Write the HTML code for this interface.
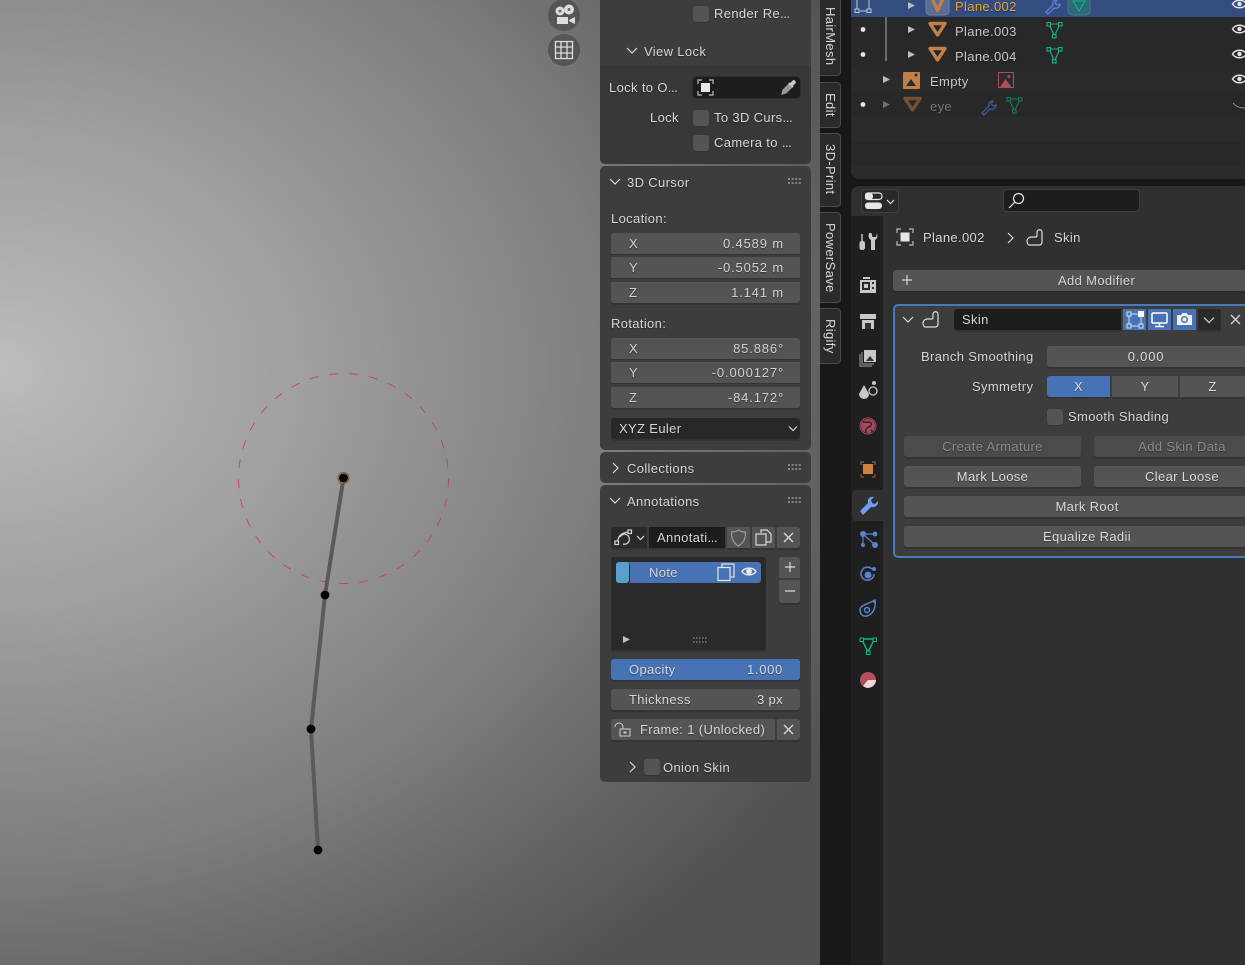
<!DOCTYPE html>
<html><head><meta charset="utf-8"><style>
*{box-sizing:border-box}
html,body{margin:0;padding:0;width:1245px;height:965px;overflow:hidden;background:#181818}
body{position:relative;font-family:"Liberation Sans",sans-serif;font-size:13px;letter-spacing:.35px;color:#d6d6d6}
.a,.t,.b,.c,.f,.i{position:absolute}
.t{white-space:nowrap;line-height:16px;text-shadow:0 1px 1px rgba(0,0,0,.35)}
.b{background:#545454;border-radius:3px;box-shadow:0 2px 0 #343434;text-align:center;line-height:21px;height:21px;white-space:nowrap;color:#dcdcdc;text-shadow:0 1px 1px rgba(0,0,0,.35)}
.f{background:#545454;height:21px;line-height:21px;color:#d0d0d0;box-shadow:0 1px 0 #343434;text-shadow:0 1px 1px rgba(0,0,0,.35)}
.f b{font-weight:normal;position:absolute;left:18px}.f u{text-decoration:none;position:absolute;right:16px;letter-spacing:.85px}
.c{width:16px;height:16px;background:#545454;border-radius:3px;box-shadow:0 1px 0 #343434}
.i{overflow:visible;fill:none;stroke:#d8d8d8;stroke-width:1.2}
.v{writing-mode:vertical-rl;position:absolute;color:#d8d8d8;line-height:14px;white-space:nowrap}
.tab{position:absolute;left:820px;width:21px;background:#2b2b2b;border:1px solid #4a4a4a;border-left:0;border-radius:0 4px 4px 0}
i{font-style:normal;letter-spacing:-.4px}
</style></head><body>
<div class="a" style="left:0;top:0;width:820px;height:965px;background:radial-gradient(ellipse 900px 720px at 0px 370px,#bebebe 0%,#b2b2b2 11%,#a0a0a0 33%,#8e8e8e 51%,#7e7e7e 68%,#6a6a6a 84%,#525252 106%)"></div>
<svg class="a" style="left:0;top:0" width="600" height="965">
<circle cx="343.500" cy="478.500" r="105" fill="none" stroke="#c9444c" stroke-width=".9" stroke-dasharray="9 11"/>
<polyline points="343.500,478 325,595 311,729 318,850" fill="none" stroke="#5a5a5a" stroke-width="4"/>
<circle cx="343.500" cy="478" r="6" fill="#5a5a5a"/><circle cx="343.500" cy="478" r="4.800" fill="#000" stroke="#b87a30" stroke-width=".8"/>
<circle cx="325" cy="595" r="4.400" fill="#000"/><circle cx="311" cy="729" r="4.400" fill="#000"/><circle cx="318" cy="850" r="4.400" fill="#000"/>
<circle cx="564" cy="15" r="16" fill="#555"/><circle cx="564" cy="50" r="16" fill="#555"/>
<circle cx="560" cy="11" r="4.500" fill="#ddd"/><circle cx="569" cy="9.500" r="5" fill="#ddd"/><circle cx="560" cy="11" r="1.500" fill="#666"/><circle cx="569" cy="9.500" r="1.500" fill="#666"/>
<rect x="557" y="17" width="11" height="7" fill="#ddd"/><path d="M569 20l6-3v7l-6-3z" fill="#ddd"/>
<path d="M555.500 41.500h17v17h-17zM555.500 47h17M555.500 53h17M561 41.500v17M567 41.500v17" fill="none" stroke="#ddd" stroke-width="1.300"/>
</svg>

<!-- Sidebar panels -->
<div class="a" style="left:600px;top:0;width:211px;height:68px;background:#3d3d3d"></div>
<div class="a" style="left:600px;top:66px;width:211px;height:98px;background:#383838;border-radius:0 0 5px 5px"></div>
<div class="a" style="left:600px;top:166px;width:211px;height:284px;background:#3d3d3d;border-radius:5px"></div>
<div class="a" style="left:600px;top:452px;width:211px;height:31px;background:#3d3d3d;border-radius:5px"></div>
<div class="a" style="left:600px;top:485px;width:211px;height:297px;background:#3d3d3d;border-radius:5px"></div>

<div class="c" style="left:693px;top:6px"></div><div class="t" style="left:714px;top:6px">Render Re<i>...</i></div>
<svg class="i" style="left:626px;top:46px" width="12" height="10"><path d="M1 2l5 5 5-5"/></svg><div class="t" style="left:644px;top:44px">View Lock</div>
<div class="t" style="left:609px;top:80px">Lock to O<i>...</i></div>
<div class="a" style="left:693px;top:77px;width:107px;height:21px;background:#1d1d1d;border-radius:4px;box-shadow:0 0 0 1px #2d2d2d"></div>
<svg class="i" style="left:697px;top:79px;stroke:#bbb" width="17" height="17"><path d="M1 5V1h4M12 1h4v4M16 12v4h-4M5 16H1v-4"/><rect x="4" y="4" width="9" height="9" fill="#e6e6e6" stroke="none"/></svg>
<svg class="i" style="left:780px;top:79px;stroke:#c8c8c8" width="17" height="17"><path d="M2 15l1-4 6-6 3 3-6 6z" fill="#999" stroke="#999"/><path d="M9 4l4 4" stroke-width="1.800"/><path d="M10 5l3-3c1-1 3 1 2 2l-3 3z" fill="#ccc"/></svg>
<div class="t" style="left:650px;top:110px">Lock</div>
<div class="c" style="left:693px;top:110px"></div><div class="t" style="left:714px;top:110px">To 3D Curs<i>...</i></div>
<div class="c" style="left:693px;top:135px"></div><div class="t" style="left:714px;top:135px">Camera to <i>...</i></div>

<svg class="i" style="left:609px;top:177px" width="12" height="10"><path d="M1 2l5 5 5-5"/></svg><div class="t" style="left:627px;top:175px">3D Cursor</div>
<svg class="a" style="left:787px;top:178px" width="16" height="7"><path d="M1 1h14M1 5h14" stroke="#999" stroke-width="1.400" stroke-dasharray="2 1.600"/></svg>
<div class="t" style="left:611px;top:211px">Location:</div>
<div class="f" style="left:611px;top:233px;width:189px;border-radius:3px 3px 0 0"><b>X</b><u>0.4589 m</u></div>
<div class="f" style="left:611px;top:257px;width:189px"><b>Y</b><u>-0.5052 m</u></div>
<div class="f" style="left:611px;top:282px;width:189px;border-radius:0 0 3px 3px;box-shadow:0 2px 0 #343434"><b>Z</b><u>1.141 m</u></div>
<div class="t" style="left:611px;top:316px">Rotation:</div>
<div class="f" style="left:611px;top:338px;width:189px;border-radius:3px 3px 0 0"><b>X</b><u>85.886°</u></div>
<div class="f" style="left:611px;top:362px;width:189px"><b>Y</b><u>-0.000127°</u></div>
<div class="f" style="left:611px;top:387px;width:189px;border-radius:0 0 3px 3px;box-shadow:0 2px 0 #343434"><b>Z</b><u>-84.172°</u></div>
<div class="a" style="left:611px;top:418px;width:189px;height:21px;background:#282828;border-radius:3px;box-shadow:0 2px 0 #343434"></div>
<div class="t" style="left:619px;top:421px">XYZ Euler</div>
<svg class="i" style="left:788px;top:425px" width="10" height="8"><path d="M1 1.500l4 4 4-4"/></svg>

<svg class="i" style="left:611px;top:462px" width="10" height="12"><path d="M2 1l5 5-5 5"/></svg><div class="t" style="left:627px;top:461px">Collections</div>
<svg class="a" style="left:787px;top:464px" width="16" height="7"><path d="M1 1h14M1 5h14" stroke="#999" stroke-width="1.400" stroke-dasharray="2 1.600"/></svg>

<svg class="i" style="left:609px;top:496px" width="12" height="10"><path d="M1 2l5 5 5-5"/></svg><div class="t" style="left:627px;top:494px">Annotations</div>
<svg class="a" style="left:787px;top:497px" width="16" height="7"><path d="M1 1h14M1 5h14" stroke="#999" stroke-width="1.400" stroke-dasharray="2 1.600"/></svg>

<div class="a" style="left:611px;top:527px;width:36px;height:21px;background:#2a2a2a;border-radius:3px 0 0 3px;box-shadow:0 2px 0 #343434"></div>
<svg class="i" style="left:614px;top:528px" width="32" height="19"><path d="M4 13c0-5 4-8 10-9M6 9a5 5 0 1 1 3 7"/><rect x="14" y="2" width="3.500" height="3.500"/><rect x="1" y="13" width="3.500" height="3.500"/><path d="M23 8l3.500 3.500L30 8"/></svg>
<div class="a" style="left:649px;top:527px;width:76px;height:21px;background:#1d1d1d;box-shadow:0 2px 0 #343434"></div><div class="t" style="left:657px;top:530px">Annotati<i>...</i></div>
<div class="a" style="left:727px;top:527px;width:23px;height:21px;background:#545454;box-shadow:0 2px 0 #343434"></div>
<svg class="i" style="left:730px;top:529px;stroke:#9a9a9a" width="17" height="18"><path d="M8.500 1c2 1.500 4 2 7 2 0 6-1 10-7 14-6-4-7-8-7-14 3 0 5-.5 7-2z"/></svg>
<div class="a" style="left:752px;top:527px;width:23px;height:21px;background:#545454;box-shadow:0 2px 0 #343434"></div>
<svg class="i" style="left:755px;top:529px" width="17" height="17"><path d="M6 4V1h6l4 4v8h-5M1 5h10v11H1z"/></svg>
<div class="a" style="left:777px;top:527px;width:23px;height:21px;background:#545454;border-radius:0 3px 3px 0;box-shadow:0 2px 0 #343434"></div>
<svg class="i" style="left:783px;top:532px;stroke-width:1.300" width="11" height="11"><path d="M1 1l9 9M10 1l-9 9"/></svg>

<div class="a" style="left:611px;top:557px;width:155px;height:93px;background:#2a2a2a;border-radius:3px;box-shadow:0 2px 0 #343434"></div>
<div class="a" style="left:616px;top:562px;width:145px;height:21px;background:#4772b3;border-radius:3px"></div>
<div class="a" style="left:616px;top:562px;width:13px;height:21px;background:#5ba0cc;border-radius:3px;box-shadow:1px 1px 0 #2a2a2a"></div>
<div class="t" style="left:649px;top:565px">Note</div>
<svg class="i" style="left:716px;top:563px;stroke:#e6e6e6" width="20" height="19"><path d="M6 4V1h12v13h-3M2 4.500h12v13H2z"/></svg>
<svg class="i" style="left:741px;top:565px;stroke:#e6e6e6;stroke-width:1.500" width="16" height="13"><path d="M1 6.500C4 2 12 2 15 6.500 12 11 4 11 1 6.500z"/><circle cx="8" cy="6.500" r="2.200" fill="#e6e6e6"/></svg>
<svg class="a" style="left:623px;top:636px" width="8" height="8"><path d="M0 0l7 3.500L0 7z" fill="#c0c0c0"/></svg>
<svg class="a" style="left:693px;top:637px" width="14" height="7"><path d="M0 1h14M0 5h14" stroke="#888" stroke-width="1.300" stroke-dasharray="1.500 1.500"/></svg>
<div class="a" style="left:779px;top:557px;width:21px;height:21px;background:#545454;border-radius:3px 3px 0 0"></div>
<div class="a" style="left:779px;top:580px;width:21px;height:23px;background:#545454;border-radius:0 0 3px 3px;box-shadow:0 2px 0 #343434"></div>
<svg class="i" style="left:783px;top:560px;stroke-width:1.200" width="14" height="34"><path d="M2 7h10M7 2v10M2 31h10"/></svg>

<div class="a" style="left:611px;top:659px;width:189px;height:21px;background:#4772b3;border-radius:3px;box-shadow:0 2px 0 #343434"></div>
<div class="t" style="left:629px;top:662px">Opacity</div><div class="t" style="right:462px;top:662px;letter-spacing:.7px">1.000</div>
<div class="a" style="left:611px;top:689px;width:189px;height:21px;background:#545454;border-radius:3px;box-shadow:0 2px 0 #343434"></div>
<div class="t" style="left:629px;top:692px">Thickness</div><div class="t" style="right:462px;top:692px">3 px</div>
<div class="a" style="left:611px;top:719px;width:164px;height:21px;background:#545454;border-radius:3px 0 0 3px;box-shadow:0 2px 0 #343434"></div>
<svg class="i" style="left:614px;top:721px;stroke:#ccc;stroke-width:1" width="18" height="17"><path d="M1 6a4 4 0 0 1 8 0v2"/><rect x="6" y="8" width="10" height="7"/><rect x="10" y="11" width="2" height="1"/></svg>
<div class="t" style="left:640px;top:722px">Frame: 1 (Unlocked)</div>
<div class="a" style="left:777px;top:719px;width:23px;height:21px;background:#545454;border-radius:0 3px 3px 0;box-shadow:0 2px 0 #343434"></div>
<svg class="i" style="left:783px;top:724px;stroke-width:1.300" width="11" height="11"><path d="M1 1l9 9M10 1l-9 9"/></svg>
<svg class="i" style="left:628px;top:761px" width="10" height="12"><path d="M2 1l5 5-5 5"/></svg>
<div class="c" style="left:644px;top:759px"></div><div class="t" style="left:663px;top:760px">Onion Skin</div>

<!-- Tabs -->
<div class="a" style="left:820px;top:0;width:31px;height:965px;background:#181818"></div>
<div class="tab" style="top:-5px;height:81px"></div><div class="tab" style="top:82px;height:46px"></div><div class="tab" style="top:133px;height:74px"></div><div class="tab" style="top:212px;height:91px"></div><div class="tab" style="top:308px;height:56px"></div>
<div class="v" style="left:823px;top:7px">HairMesh</div><div class="v" style="left:823px;top:93px">Edit</div><div class="v" style="left:823px;top:144px">3D-Print</div><div class="v" style="left:823px;top:223px">PowerSave</div><div class="v" style="left:823px;top:319px">Rigify</div>

<!-- Outliner -->
<div class="a" style="left:851px;top:0;width:394px;height:179px;background:#282828;border-radius:0 0 0 8px"></div>
<div class="a" style="left:851px;top:67px;width:394px;height:25px;background:#2b2b2b"></div>
<div class="a" style="left:851px;top:117px;width:394px;height:25px;background:#2b2b2b"></div>
<div class="a" style="left:851px;top:166px;width:394px;height:13px;background:#2b2b2b;border-radius:0 0 0 8px"></div>
<div class="a" style="left:851px;top:0;width:394px;height:17px;background:#334d80"></div>
<div class="a" style="left:885px;top:17px;width:1.500px;height:44px;background:#6a6a6a"></div>
<svg class="i" style="left:853px;top:-6px;stroke:#c8c8c8;stroke-width:1" width="20" height="20"><path d="M4 6v9M7 17h7M16 6v9"/><rect x="2" y="15" width="4" height="3.500"/><rect x="14" y="15" width="4" height="3.500"/><rect x="13" y="1" width="6" height="5" fill="#eee" stroke="none"/></svg>
<svg class="a" style="left:851px;top:0" width="394" height="120">
<g fill="#bdbdbd"><path d="M57 2l7 3.500-7 3.500zM57 26l7 3.500-7 3.500zM57 51l7 3.500-7 3.500zM32 76l7 3.500-7 3.500z"/><path d="M32 101l7 3.500-7 3.500z" fill="#6f6f6f"/></g>
<g fill="#e6e6e6"><circle cx="12" cy="29.500" r="2.400"/><circle cx="12" cy="54.500" r="2.400"/><circle cx="12" cy="104.500" r="2.400"/></g>
<rect x="75" y="-8" width="23" height="23" rx="4" fill="#5d6d90" stroke="#6f7f9f"/>
<g fill="none" stroke="#c0804a" stroke-width="3.400" stroke-linejoin="round"><path d="M80.500 -3L86.500 10.500 92.500 -3"/><path d="M79 23.500h15L86.500 35zM79 48.500h15L86.500 60z"/><path d="M54 98.500h15L61.500 110z" stroke="#74502f"/></g>
<rect x="52" y="72" width="17" height="17" rx="1" fill="#c17f45"/><path d="M55 86l5-7 5 7z" fill="#2b2b2b"/><circle cx="65" cy="75" r="1.500" fill="#2b2b2b"/>
<rect x="147.500" y="72.500" width="15" height="15" fill="none" stroke="#a84e5c"/><path d="M149 87l5.500-8 6 8z" fill="#a84e5c"/><circle cx="158" cy="76.500" r="1.500" fill="#a84e5c"/>
<g fill="none" stroke="#5c82d8" stroke-width="1.300"><path d="M195 12l7-7c-1-3 1-5 4-5l-2 3 2 2 3-1c0 3-3 5-6 4l-6 6z"/></g>
<path d="M131 113l7-7c-1-3 1-5 4-5l-2 3 2 2 3-1c0 3-3 5-6 4l-6 6z" fill="none" stroke="#3f5b94" stroke-width="1.300"/>
<rect x="217" y="-8" width="22" height="23" rx="4" fill="#2d6a78" stroke="#3f7a86"/>
<g fill="none" stroke="#10b48c" stroke-width="1.100"><path d="M222 1l6 10 6-10zM198 24h11l-5.500 12zM198 49h11l-5.500 12z"/>
<g fill="#282828"><rect x="196" y="22.500" width="3.500" height="3.500"/><rect x="207.500" y="22.500" width="3.500" height="3.500"/><rect x="201.500" y="34.500" width="3.500" height="3.500"/><rect x="196" y="47.500" width="3.500" height="3.500"/><rect x="207.500" y="47.500" width="3.500" height="3.500"/><rect x="201.500" y="59.500" width="3.500" height="3.500"/></g>
<g stroke="#0d7a60" fill="#2b2b2b"><path d="M158 99h11l-5.500 12z" fill="none"/><rect x="156" y="97.500" width="3.500" height="3.500"/><rect x="167.500" y="97.500" width="3.500" height="3.500"/><rect x="161.500" y="109.500" width="3.500" height="3.500"/></g></g>
<g fill="none" stroke="#e6e6e6" stroke-width="1.400"><path d="M381.500 4c3-5 11-5 14 0-3 5-11 5-14 0zM381.500 29c3-5 11-5 14 0-3 5-11 5-14 0zM381.500 54c3-5 11-5 14 0-3 5-11 5-14 0zM381.500 79c3-5 11-5 14 0-3 5-11 5-14 0z"/></g>
<g fill="#e6e6e6"><circle cx="388.500" cy="4" r="2.200"/><circle cx="388.500" cy="29" r="2.200"/><circle cx="388.500" cy="54" r="2.200"/><circle cx="388.500" cy="79" r="2.200"/></g>
<path d="M382 103c3 4 8 5 12 5" fill="none" stroke="#999" stroke-width="1"/>
</svg>
<div class="t" style="left:955px;top:-1px;color:#f0a030">Plane.002</div>
<div class="t" style="left:955px;top:24px;color:#c8c8c8">Plane.003</div>
<div class="t" style="left:955px;top:49px;color:#c8c8c8">Plane.004</div>
<div class="t" style="left:930px;top:74px;color:#c8c8c8">Empty</div>
<div class="t" style="left:930px;top:99px;color:#777">eye</div>

<!-- Properties -->
<div class="a" style="left:851px;top:186px;width:394px;height:779px;background:#303030;border-radius:8px 0 0 0"></div>
<div class="a" style="left:851px;top:216px;width:32px;height:749px;background:#1f1f1f"></div>
<div class="a" style="left:861px;top:189px;width:38px;height:24px;background:#2a2a2a;border:1px solid #3f3f3f;border-radius:4px"></div>
<svg class="a" style="left:865px;top:192px" width="32" height="18"><rect x="0" y="1" width="17" height="6.500" rx="3" fill="none" stroke="#e6e6e6" stroke-width="1.200"/><rect x="0" y="1" width="8" height="6.500" rx="3" fill="#e6e6e6"/><rect x="0" y="10.500" width="17" height="6.500" rx="3" fill="#e6e6e6"/><path d="M22 8l3.500 3.500L29 8" fill="none" stroke="#ddd" stroke-width="1.200"/></svg>
<div class="a" style="left:1003px;top:189px;width:137px;height:23px;background:#1d1d1d;border:1px solid #3f3f3f;border-radius:4px"></div>
<svg class="i" style="left:1007px;top:191px;stroke:#e6e6e6" width="20" height="19"><circle cx="11.500" cy="7.500" r="5"/><path d="M8 11l-6 6"/></svg>
<div class="a" style="left:852px;top:490px;width:31px;height:31px;background:#303030;border-radius:4px 0 0 4px"></div>

<svg class="i" style="left:896px;top:228px;stroke:#bbb" width="19" height="19"><path d="M1 5V1h4M13 1h4v4M17 13v4h-4M5 17H1v-4"/><rect x="4.500" y="4.500" width="9" height="9" fill="#e6e6e6" stroke="none"/></svg>
<div class="t" style="left:923px;top:230px">Plane.002</div>
<svg class="i" style="left:1006px;top:232px" width="10" height="12"><path d="M2 1l5 5-5 5"/></svg>
<svg class="i" style="left:1026px;top:229px;stroke:#ddd" width="18" height="17"><path d="M1 12c0-2 2-4 4-4h5c1 0 1-1 1-2V3c0-3 5-3 5 0v10c0 2-1 3-3 3H3c-1 0-2-2-2-4z"/></svg>
<div class="t" style="left:1054px;top:230px">Skin</div>
<div class="a" style="left:893px;top:270px;width:352px;height:21px;background:#545454;border-radius:3px 0 0 3px;box-shadow:0 2px 0 #2a2a2a"></div>
<svg class="i" style="left:901px;top:274px;stroke-width:1.200" width="12" height="12"><path d="M1 6h10M6 1v10"/></svg>
<div class="t" style="left:1058px;top:273px">Add Modifier</div>

<div class="a" style="left:893px;top:304px;width:360px;height:254px;background:#3d3d3d;border:2px solid #4a78b8;border-radius:5px"></div>
<svg class="i" style="left:902px;top:315px" width="12" height="10"><path d="M1 2l5 5 5-5"/></svg>
<svg class="i" style="left:922px;top:311px;stroke:#ddd" width="18" height="17"><path d="M1 12c0-2 2-4 4-4h5c1 0 1-1 1-2V3c0-3 5-3 5 0v10c0 2-1 3-3 3H3c-1 0-2-2-2-4z"/></svg>
<div class="a" style="left:954px;top:309px;width:167px;height:21px;background:#1d1d1d;border-radius:3px 0 0 3px;box-shadow:0 2px 0 #343434"></div><div class="t" style="left:962px;top:312px">Skin</div>
<div class="a" style="left:1123px;top:309px;width:23px;height:21px;background:#4772b3"></div>
<svg class="i" style="left:1125px;top:310px;stroke:#cfe0f5;stroke-width:1" width="19" height="19"><path d="M6 4h7M4 6v8M6 16h8M16 7v7"/><rect x="2" y="2" width="4" height="4"/><rect x="2" y="14" width="4" height="4"/><rect x="14" y="14" width="4" height="4"/><rect x="13" y="1" width="6" height="6" fill="#fff" stroke="none"/></svg>
<div class="a" style="left:1148px;top:309px;width:23px;height:21px;background:#4772b3"></div>
<svg class="i" style="left:1151px;top:312px;stroke:#fff;stroke-width:1.500" width="17" height="16"><rect x="1" y="1" width="15" height="10" rx="1"/><path d="M4 14.500h9M8.500 11v3"/></svg>
<div class="a" style="left:1173px;top:309px;width:23px;height:21px;background:#4772b3"></div>
<svg class="a" style="left:1176px;top:311px" width="17" height="16"><path d="M1 4h4l1.500-2h4L12 4h4v10H1z" fill="#f0f0f0"/><circle cx="8.500" cy="8.500" r="3.500" fill="#4772b3"/><circle cx="8.500" cy="8.500" r="2" fill="#f0f0f0"/></svg>
<div class="a" style="left:1198px;top:309px;width:23px;height:21px;background:#2a2a2a;border-radius:0 3px 3px 0;box-shadow:0 2px 0 #343434"></div>
<svg class="i" style="left:1203px;top:316px" width="13" height="9"><path d="M1 1.500l5 5 5-5"/></svg>
<svg class="i" style="left:1230px;top:314px;stroke-width:1.300" width="11" height="11"><path d="M1 1l9 9M10 1l-9 9"/></svg>

<div class="t" style="left:921px;top:349px">Branch Smoothing</div>
<div class="b" style="left:1047px;top:346px;width:198px;border-radius:3px 0 0 3px;letter-spacing:.8px">0.000</div>
<div class="t" style="left:972px;top:379px">Symmetry</div>
<div class="b" style="left:1047px;top:376px;width:63px;background:#4772b3;border-radius:3px 0 0 3px">X</div>
<div class="b" style="left:1112px;top:376px;width:66px;border-radius:0">Y</div>
<div class="b" style="left:1180px;top:376px;width:65px;border-radius:0">Z</div>
<div class="c" style="left:1047px;top:409px"></div><div class="t" style="left:1068px;top:409px">Smooth Shading</div>
<div class="b" style="left:904px;top:436px;width:177px;color:#8a8a8a;background:#4b4b4b">Create Armature</div>
<div class="b" style="left:1094px;top:436px;width:176px;color:#8a8a8a;background:#4b4b4b">Add Skin Data</div>
<div class="b" style="left:904px;top:466px;width:177px">Mark Loose</div>
<div class="b" style="left:1094px;top:466px;width:176px">Clear Loose</div>
<div class="b" style="left:904px;top:496px;width:366px">Mark Root</div>
<div class="b" style="left:904px;top:526px;width:366px">Equalize Radii</div>

<!-- Properties tabs -->
<svg class="a" style="left:851px;top:225px" width="32" height="470">
<path d="M11 9v7" stroke="#c8c8c8" stroke-width="1.400"/><rect x="8.500" y="16" width="5.500" height="9" rx="2.200" fill="#c8c8c8"/>
<path d="M18 8c-1 4 0 6 2 7v10h4V15c2-1 3-3 2-7l-1 4h-3.500l-1-4z" fill="#c8c8c8"/>
<path d="M9 55h16v13H9z" fill="#c8c8c8"/><rect x="11" y="57" width="8" height="8" fill="#2a2a2a"/><rect x="13" y="59" width="4" height="4" fill="#c8c8c8"/><path d="M12 53h7" stroke="#c8c8c8" stroke-width="2"/><path d="M21 58h2M21 63h2" stroke="#2a2a2a" stroke-width="2"/>
<rect x="9" y="89" width="16" height="5" fill="#c8c8c8"/><path d="M11 95h12v9H11z" fill="#c8c8c8"/><rect x="14" y="98" width="6" height="6" fill="#333"/>
<path d="M13 125h12v12H13z" fill="#c8c8c8"/><path d="M11 127v12h12M9 129v12h12" fill="none" stroke="#888" stroke-width="1.200"/><path d="M15 136l4-5 4 5z" fill="#333"/>
<path d="M13 160l5 9a4 4 0 0 1-10 0z" fill="#c8c8c8"/><circle cx="22" cy="166" r="4" fill="none" stroke="#c8c8c8" stroke-width="1.300"/><circle cx="23" cy="158" r="2" fill="#c8c8c8"/>
<circle cx="17" cy="201" r="7" fill="#a8485a"/><circle cx="17" cy="201" r="8" fill="none" stroke="#a8485a" stroke-width="1"/><path d="M12 197c3 1 6-1 8 1s-2 4-4 5-1 4-1 5M20 205l3 3" fill="none" stroke="#2a2a2a" stroke-width="1.500"/>
<path d="M10 240v-3h3M21 237h3v3M24 249v3h-3M13 252h-3v-3" fill="none" stroke="#8a5a30" stroke-width="1.200"/><rect x="12" y="239" width="10" height="10" fill="#d0813d"/>
<path d="M9 286l8-8c-1-4 2-7 6-6l-3 3 1 3 3 1 3-3c1 4-3 7-7 6l-8 8z" fill="#6f9df0"/>
<g fill="#5a82cf"><circle cx="12" cy="309" r="3"/><circle cx="24" cy="309" r="2.400"/><circle cx="12" cy="320" r="2"/><circle cx="24" cy="320" r="3"/></g><path d="M12 309h12M12 309v11M12 309l12 11" stroke="#5a82cf" stroke-width="1.200" fill="none"/>
<path d="M23 349a6.500 6.500 0 1 1-2-5" fill="none" stroke="#5a82cf" stroke-width="1.500"/><circle cx="17" cy="350" r="3.500" fill="#5a82cf"/><circle cx="23" cy="344" r="2" fill="#5a82cf"/>
<path d="M9 385c0-5 8-6 15-10 1 6-1 14-8 16-4 1-7-2-7-6z" fill="none" stroke="#5a82cf" stroke-width="1.500"/><circle cx="16" cy="385" r="2.500" fill="none" stroke="#5a82cf" stroke-width="1.500"/><circle cx="23" cy="377" r="1" fill="#5a82cf"/>
<path d="M10.500 414h13L17 427z" fill="none" stroke="#10b48c" stroke-width="1.400"/><g fill="#1f1f1f" stroke="#10b48c"><rect x="9" y="413" width="3.500" height="3.500"/><rect x="22" y="413" width="3.500" height="3.500"/><rect x="15.500" y="426" width="3.500" height="3.500"/></g>
<circle cx="17" cy="455" r="8" fill="#b5505a"/><path d="M17 455h8a8 8 0 0 1-13 6z" fill="#e8d8d8"/>
</svg>
</body></html>
